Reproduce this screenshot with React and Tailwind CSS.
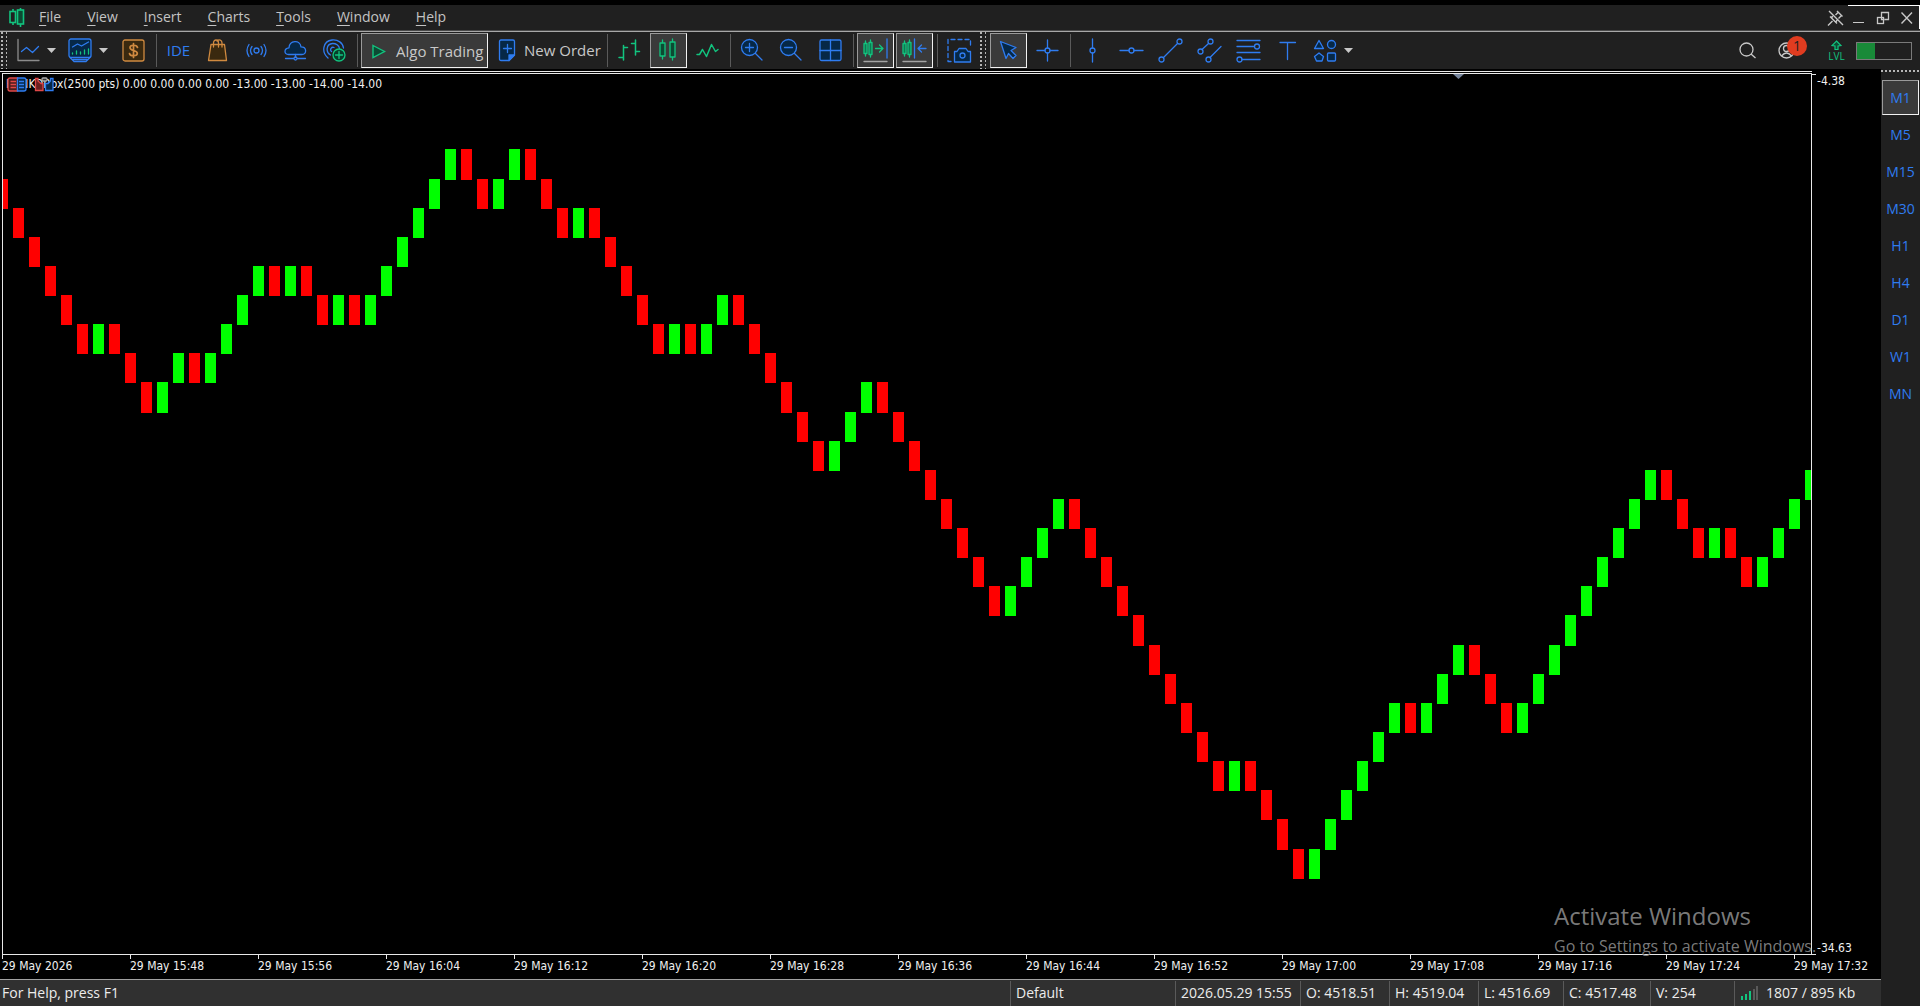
import clsx from "clsx"

const BLUE = "#2f7cf0"
const GREEN = "#12c47f"
const ORANGE = "#d08a40"
const GREY = "#c8c8c8"
const NAVY = "#062847"

const menus = ["File", "View", "Insert", "Charts", "Tools", "Window", "Help"]
const timeframes = ["M1", "M5", "M15", "M30", "H1", "H4", "D1", "W1", "MN"]
const times = ["29 May 2026", "29 May 15:48", "29 May 15:56", "29 May 16:04", "29 May 16:12", "29 May 16:20", "29 May 16:28", "29 May 16:36", "29 May 16:44", "29 May 16:52", "29 May 17:00", "29 May 17:08", "29 May 17:16", "29 May 17:24", "29 May 17:32"]

// renko runs: positive = up bricks, negative = down bricks
const runs = [-6, 1, -3, 2, -1, 4, -1, 1, -2, 1, -1, 6, -2, 2, -3, 1, -5, 1, -1, 2, -6, 3, -8, 4, -10, 1, -4, 6, -1, 3, -3, 9, -3, 1, -2, 4]

function getBricks() {
    const bricks = []
    let level = 0
    runs.forEach((run) => {
        const up = run > 0
        for (let n = 0; n < Math.abs(run); n++) {
            // the first brick after a reversal stays on the same level
            if (n > 0 || bricks.length === 0) level += up ? -1 : 1
            bricks.push({ up, level })
        }
    })
    return bricks
}

const levelY = (level) => Math.floor(75.88 + level * 29.13)

function Icon({ children, color = BLUE, fill = "none", w = 25 }) {
    return (
        <svg className="shrink-0" width={w} height="25" viewBox={`0 0 ${w} 25`} fill={fill} stroke={color} strokeWidth="1.3" strokeLinecap="round" strokeLinejoin="round" aria-hidden="true">
            {children}
        </svg>
    )
}

const Caret = () => (
    <svg className="shrink-0" width="9" height="5" viewBox="0 0 9 5" aria-hidden="true"><path d="M0 0H9L4.5 5Z" fill={GREY} /></svg>
)

function ToolButton({ label, active, children, className = "w-[39px] justify-center" }) {
    if (active) {
        return (
            <button aria-label={label} aria-pressed="true" className="mx-px flex h-[35px] w-[37px] shrink-0 items-center justify-center border border-t-[#9a9a9a] border-r-[#f2f2f2] border-b-[#f2f2f2] border-l-[#9a9a9a] bg-[#3a3a3a]">
                {children}
            </button>
        )
    }
    return <button aria-label={label} className={clsx("flex h-[37px] shrink-0 items-center", className)}>{children}</button>
}

const Separator = () => <div className="ml-[3px] mr-[2px] h-[33px] w-px shrink-0 bg-[#5a5a5a]" />

const Grip = ({ className }) => (
    <div className={clsx("flex h-[37px] shrink-0 gap-[3px]", className)}>
        <div className="w-[2px] bg-[repeating-linear-gradient(#b4b4b4_0_2px,transparent_2px_4px)]" />
        <div className="w-px bg-[repeating-linear-gradient(#b4b4b4_0_2px,transparent_2px_4px)]" />
    </div>
)

const candleShape = (
    <>
        <path d="M6.5 2V5M6.5 18V21M16.5 1V4M16.5 19V22" />
        <rect x="4" y="5" width="5" height="13" />
        <rect x="14" y="4" width="5" height="15" />
    </>
)

const smallCandles = (
    <g stroke={GREEN} fill="#0d7a50">
        <path d="M2.5 3V6M2.5 15V18M7.5 2V5M7.5 16V19" />
        <rect x="1" y="5.5" width="3" height="10" />
        <rect x="6" y="4.5" width="3" height="12" />
    </g>
)

function MenuBar() {
    return (
        <header className="flex h-[25px] shrink-0 items-center justify-between bg-[#202020]">
            <div className="flex items-center">
                <svg className="ml-[9px] mr-px" width="16" height="21" viewBox="0 0 16 21" fill="none" stroke={GREEN} strokeWidth="1.6" aria-hidden="true">
                    <path d="M4 2V5M4 15V18M11.5 1V3M11.5 17V20" />
                    <rect x="1" y="4.5" width="5.5" height="11" />
                    <rect x="8.5" y="3" width="6" height="14" fill="#0c4a33" />
                </svg>
                <nav className="flex">
                    {menus.map((menu) => (
                        <button key={menu} className="px-[13px] pb-px text-sm leading-[22px] text-[#c4c4c4]">
                            <span className="underline underline-offset-3">{menu[0]}</span>{menu.slice(1)}
                        </button>
                    ))}
                </nav>
            </div>
            <div className="flex h-full">
                <button aria-label="Unpin" className="flex w-[28px] items-center pl-[7px]">
                    <svg width="18" height="18" viewBox="0 0 18 18" fill="none" stroke={GREY} strokeWidth="1.4" aria-hidden="true">
                        <path d="M1 16.5L5.5 12M2 2L16 16M10 2L15.5 7.5M11 3.5L8.5 6M14 7L11.5 9.5M3 7.5L10 14.5M4 8.5L6 7.5M9 13L10 11" />
                    </svg>
                </button>
                <div className="flex h-[24px] items-center border-t border-r border-white">
                    <button aria-label="Minimize" className="w-[24px] px-[5px] pt-[9px]"><div className="h-px w-[11px] bg-[#c8c8c8]" /></button>
                    <button aria-label="Restore" className="w-[24px] px-[4px]">
                        <svg width="14" height="14" viewBox="0 0 14 14" fill="none" stroke={GREY} strokeWidth="1.3" aria-hidden="true">
                            <path d="M5.5 4V1.5H12.5V8.5H8.5" /><rect x="1.5" y="6.5" width="6" height="6" /><path d="M5.5 4V8.5H8.5" />
                        </svg>
                    </button>
                    <button aria-label="Close" className="w-[23px] px-[4px]">
                        <svg width="14" height="14" viewBox="0 0 14 14" stroke={GREY} strokeWidth="1.4" aria-hidden="true"><path d="M1.5 1.5L12 12.5M12 1.5L1.5 12.5" /></svg>
                    </button>
                </div>
            </div>
        </header>
    )
}

function Toolbar() {
    return (
        <div className="flex h-[37px] shrink-0 items-center overflow-hidden bg-[#202020]">
            <Grip className="w-[9px] shrink-0 pl-px" />
            <ToolButton label="Chart type" className="w-[52px] gap-[6px] pl-[7px]">
                <Icon><path d="M2 1.5V22.5H23" stroke="#8c8c8c" /><path d="M5.5 13.5L10.5 9.5L16.5 14.5L22.5 8.5" /></Icon>
                <Caret />
            </ToolButton>
            <ToolButton label="Indicators" className="w-[52px] gap-[6px] pl-[7px]">
                <Icon>
                    <rect x="1" y="1" width="22" height="18.5" rx="2" fill={NAVY} />
                    <path d="M2 19.5L6 23.5H18L22 19.5M5 21.5H19" />
                    <path d="M4.5 9L9.5 6L13.5 8L20.5 4" />
                    <path d="M4.5 15V16M8.5 13V16M12.5 14V16M16.5 12V16M20.5 11V16" stroke={GREEN} />
                </Icon>
                <Caret />
            </ToolButton>
            <ToolButton label="Symbols" className="w-[40px] justify-center">
                <Icon color={ORANGE}>
                    <rect x="2" y="2" width="21" height="21" rx="2" fill="#3a290f" />
                    <path d="M12.5 5.5V19.5M16.5 9.5C16 6.5 9 6.5 9 9.7C9 13 16.3 12 16.3 15.3C16.3 18.5 9 18.5 8.5 15.5" strokeWidth="1.7" />
                </Icon>
            </ToolButton>
            <Separator />
            <button className="flex h-[37px] w-[39px] shrink-0 items-center justify-center text-[15px] text-[#2f7cf0]">IDE</button>
            <ToolButton label="Market">
                <Icon color={ORANGE}>
                    <path d="M6 6.5H19.5L21.5 22.5H3.5Z" fill="#3a290f" />
                    <path d="M8.5 9V5C8.5 1 13.5 1 13.5 5V9M12 3C14 1 17 2 17 5V9" />
                </Icon>
            </ToolButton>
            <ToolButton label="Signals">
                <Icon>
                    <circle cx="12.5" cy="12.5" r="2.5" />
                    <path d="M8 8.5Q5 12.5 8 16.5M17 8.5Q20 12.5 17 16.5M5 6.5Q1 12.5 5 18.5M20 6.5Q24 12.5 20 18.5" />
                </Icon>
            </ToolButton>
            <ToolButton label="Virtual hosting">
                <Icon>
                    <path d="M5.5 16.5C1 16.5 0.5 10.5 6 9.8C6.5 2 17 1.5 18 8.8C24 8.8 24 16.5 19 16.5Z" fill={NAVY} />
                    <path d="M12.5 16.5V19.5M2.5 20.5H10.5M14.5 20.5H22.5" /><circle cx="12.5" cy="20.5" r="1.5" />
                </Icon>
            </ToolButton>
            <ToolButton label="Add account">
                <Icon>
                    <path d="M6 20C-1 14 1 3 10 2C16 1.3 21 5 21.5 10M8.5 17C3.5 14 4 6 10.5 5.5C14 5.3 17 7.5 17.5 10.5M9.5 13.5C7.5 11.5 9.5 8.5 12 9.5" />
                    <circle cx="17" cy="17" r="6" fill="#073d2b" stroke={GREEN} /><path d="M17 13.5V20.5M13.5 17H20.5" stroke={GREEN} />
                </Icon>
            </ToolButton>
            <Separator />
            <button aria-pressed="true" className="ml-px flex h-[35px] w-[127px] shrink-0 items-center gap-[10px] border border-t-[#9a9a9a] border-r-[#f2f2f2] border-b-[#f2f2f2] border-l-[#9a9a9a] bg-[#3a3a3a] pt-px pl-[10px] text-[15px] whitespace-nowrap text-[#c8c8c8]">
                <svg className="shrink-0" width="14" height="15" viewBox="0 0 14 15" aria-hidden="true"><path d="M1 1.5L12.5 7.5L1 13.5Z" fill="#0c4a33" stroke={GREEN} strokeWidth="1.4" /></svg>
                Algo Trading
            </button>
            <button className="flex h-[37px] w-[116px] shrink-0 items-center gap-[4px] pl-[7px] text-[15px] whitespace-nowrap text-[#c8c8c8]">
                <Icon>
                    <path d="M6 2H18Q19.5 2 19.5 3.5V17L14 22.5H6Q4.5 22.5 4.5 21V3.5Q4.5 2 6 2Z" fill={NAVY} />
                    <path d="M19.5 17L14 22.5V17Z" fill={BLUE} /><path d="M12.5 6.5V14.5M8.5 10.5H16.5" />
                </Icon>
                New Order
            </button>
            <Separator />
            <ToolButton label="Bar chart">
                <Icon color={GREEN}><path d="M6.5 7.5V22M2 19.5H6.5M6.5 9.5H10.5M18.5 2V17M14.5 5.5H18.5M18.5 13.5H22.5" strokeWidth="1.5" /></Icon>
            </ToolButton>
            <ToolButton label="Candlesticks" active><Icon color={GREEN} fill="#0c4a33">{candleShape}</Icon></ToolButton>
            <ToolButton label="Line chart"><Icon color={GREEN}><path d="M2 16.5H4.5L7.5 11.5L11.5 18.5L16.5 6.5L20.5 13.5L23 11.5" strokeWidth="1.5" /></Icon></ToolButton>
            <Separator />
            <ToolButton label="Zoom in"><Icon><circle cx="9.5" cy="9.5" r="8" fill={NAVY} /><path d="M15.5 15.5L22 22M5.5 9.5H13.5M9.5 5.5V13.5" /></Icon></ToolButton>
            <ToolButton label="Zoom out"><Icon><circle cx="9.5" cy="9.5" r="8" fill={NAVY} /><path d="M15.5 15.5L22 22M5.5 9.5H13.5" /></Icon></ToolButton>
            <ToolButton label="Tile windows"><Icon><rect x="2" y="2" width="21" height="20.5" rx="1.5" fill={NAVY} /><path d="M12.5 2V22.5M2 12.5H23" /></Icon></ToolButton>
            <Separator />
            <ToolButton label="Auto scroll" active>
                <Icon>{smallCandles}<path d="M12.5 10.5H20M16.5 7L20 10.5L16.5 14" stroke={GREEN} /><path d="M24 1V20" /><path d="M1 23.5H24" stroke="#a4a4a4" /></Icon>
            </ToolButton>
            <ToolButton label="Chart shift" active>
                <Icon>{smallCandles}<path d="M12.5 1V20M16 10.5H24M19.5 7L16 10.5L19.5 14" /><path d="M1 23.5H24" stroke="#a4a4a4" /></Icon>
            </ToolButton>
            <Separator />
            <ToolButton label="Screenshot">
                <Icon>
                    <path d="M4 23.5H1V1.5H23.5V8" strokeDasharray="4 3" />
                    <path d="M7.5 13.5H10L12 10.5H19L21 13.5H23.5V24H7.5Z" fill={NAVY} /><circle cx="15.5" cy="17.5" r="2.5" />
                </Icon>
            </ToolButton>
            <Grip className="w-[10px] pl-px" />
            <ToolButton label="Cursor" active>
                <Icon><path d="M4.500 3.500L20 9.500L15 12.500L20 17.500L17 20.500L12.500 15.500L10 20.500Z" fill={NAVY} /></Icon>
            </ToolButton>
            <ToolButton label="Crosshair"><Icon><path d="M12.5 2V10M12.5 15V23M2 12.5H10M15 12.5H23" /><circle cx="12.5" cy="12.5" r="2.5" /></Icon></ToolButton>
            <Separator />
            <ToolButton label="Vertical line"><Icon><path d="M12.5 1V10M12.5 15V24" /><circle cx="12.5" cy="12.5" r="2.5" /></Icon></ToolButton>
            <ToolButton label="Horizontal line"><Icon><path d="M1 12.5H10M15 12.5H24" /><circle cx="12.5" cy="12.5" r="2.5" /></Icon></ToolButton>
            <ToolButton label="Trendline"><Icon><path d="M5.5 19.5L19.5 5.5" /><circle cx="3.5" cy="21.5" r="2.5" /><circle cx="21.5" cy="3.5" r="2.5" /></Icon></ToolButton>
            <ToolButton label="Channel"><Icon><path d="M5 11.5L11.5 5.5M13 19.5L24 8.5" /><circle cx="3.5" cy="13.5" r="2.5" /><circle cx="13.5" cy="3.5" r="2.5" /><circle cx="11.5" cy="21.5" r="2.5" /></Icon></ToolButton>
            <ToolButton label="Fibonacci"><Icon><path d="M1 2.5H24M1 8.5H18M1 14.5H24M6 21.5H24" /><circle cx="21" cy="8.5" r="2.5" /><circle cx="3.5" cy="21.5" r="2.5" /></Icon></ToolButton>
            <ToolButton label="Text"><Icon><path d="M5 4.5H20.5M12.5 4.5V21.5" /></Icon></ToolButton>
            <ToolButton label="Shapes" className="w-[52px] gap-[6px] pl-[6px]">
                <Icon fill={NAVY}>
                    <path d="M6 2.5L10.5 10.5H1.5Z" /><circle cx="18.5" cy="6.5" r="4" />
                    <path d="M6 15L10.5 18.5L9 23H3.5L1.5 18.5Z" /><rect x="14.5" y="15" width="8" height="8" rx="1" />
                </Icon>
                <Caret />
            </ToolButton>
            <div className="ml-auto flex items-center pr-[8px]">
                <ToolButton label="Search">
                    <svg width="17" height="17" viewBox="0 0 17 17" fill="none" stroke={GREY} strokeWidth="1.3" aria-hidden="true"><circle cx="7.5" cy="7.5" r="6.5" /><path d="M12 12L16.5 16" /></svg>
                </ToolButton>
                <button aria-label="Account, 1 notification" className="relative flex h-[37px] w-[61px] items-center pl-[11px]">
                    <svg width="17" height="17" viewBox="0 0 17 17" fill="none" stroke={GREY} strokeWidth="1.3" aria-hidden="true">
                        <circle cx="8.5" cy="8.5" r="7.5" /><circle cx="8.5" cy="6.5" r="3" /><path d="M3.5 14Q8.5 8 13.5 14" />
                    </svg>
                    <span className="absolute top-[4px] left-[20px] flex size-[20px] items-center justify-center rounded-full bg-[#e03c20] text-sm text-[#202020]">1</span>
                </button>
                <button aria-label="Level" className="mr-[11px] flex w-[17px] flex-col items-center text-[#12c47f]">
                    <svg width="11" height="11" viewBox="0 0 11 11" fill="#0c4a33" stroke={GREEN} strokeWidth="1.2" aria-hidden="true"><path d="M5.5 1L10 5.5L7 6V9.5H4V6L1 5.5Z" /></svg>
                    <span className="text-[10px] leading-[11px] font-medium">LVL</span>
                </button>
                <div className="h-[18px] w-[56px] border border-[#7a7a7a]"><div className="h-full w-[18px] bg-[#188a38]" /></div>
            </div>
        </div>
    )
}

function Chart() {
    return (
        <section className="flex min-h-0 flex-1 flex-col bg-black pt-[2px] font-['DejaVu_Sans_Condensed','DejaVu_Sans',sans-serif] text-xs leading-[16px] text-[#f0f0f0]">
            <div className="flex min-h-0 flex-1">
                <div className="flex min-w-0 flex-1 flex-col border-t border-[#e8e8e8] pt-px">
                    <div className="relative ml-[2px] min-h-0 flex-1 overflow-hidden border border-[#e8e8e8]">
                        <svg className="block size-full" shapeRendering="crispEdges" role="img" aria-label="Renko chart">
                            {getBricks().map((brick, i) => {
                                const y = levelY(brick.level)
                                return <rect key={i} x={i * 16 - 6} y={y} width="11" height={levelY(brick.level + 1) - y + 1} fill={brick.up ? "#00ff00" : "#ff0000"} />
                            })}
                        </svg>
                        <div className="absolute top-[2px] left-[3px] whitespace-nowrap">RENKOBox(2500 pts) 0.00 0.00 0.00 0.00 -13.00 -13.00 -14.00 -14.00</div>
                        <svg className="absolute top-[3px] left-[4px]" width="48" height="15" viewBox="0 0 48 15" strokeWidth="1.3" aria-hidden="true">
                            <path d="M10.5 1H3Q1 1 1 3V12Q1 14 3 14H10.5Z" fill="#4d1b1b" stroke="#e04848" />
                            <path d="M10.5 1H17Q19 1 19 3V12Q19 14 17 14H10.5Z" fill={NAVY} stroke={BLUE} />
                            <path d="M3.5 4.5H9M3.5 7.5H9M3.5 10.5H9" stroke="#e04848" /><path d="M12 4.5H17M12 7.5H17M12 10.5H17" stroke={BLUE} />
                            <path d="M28.5 1.5H31V4L34 6.5H36V13.5H28.5Z" fill="#6a2020" stroke="#e04848" />
                            <path d="M46 1.5H43.5V4L41 6.5H38.5V13.5H46Z" fill={NAVY} stroke={BLUE} />
                            <rect x="35" y="1" width="5" height="3" rx="1" fill="#333" stroke="#aaa" />
                        </svg>
                        <svg className="absolute top-0 right-[347px]" width="11" height="5" viewBox="0 0 11 5" aria-hidden="true"><path d="M0 0H11L5.5 5Z" fill="#76859c" /></svg>
                    </div>
                </div>
                <div className="flex w-[69px] shrink-0 flex-col justify-between pt-[3px] leading-[12px]">
                    <div><div className="h-px w-[4px] bg-[#e8e8e8]" /><div className="pl-[5px]">-4.38</div></div>
                    <div><div className="pl-[5px]">-34.63</div><div className="h-px w-[4px] bg-[#e8e8e8]" /></div>
                </div>
            </div>
            <div className="ml-[2px] flex h-[24px] shrink-0 overflow-hidden">
                {times.map((time) => (
                    <div key={time} className="w-[128px] shrink-0 leading-[14px] whitespace-nowrap">
                        <div className="h-[4px] w-px bg-[#e8e8e8]" />
                        <div>{time}</div>
                    </div>
                ))}
            </div>
        </section>
    )
}

function StatusCell({ children, className }) {
    return <div className={clsx("flex h-[25px] shrink-0 items-center border-l border-[#5a5a5a] pl-[5px]", className)}>{children}</div>
}

function StatusBar() {
    return (
        <footer className="flex h-[27px] shrink-0 items-center border-t border-[#a0a0a0] bg-[#303030] text-sm whitespace-nowrap text-[#ececec]">
            <div className="min-w-0 flex-1 pl-[2px]">For Help, press F1</div>
            <StatusCell className="w-[165px]">Default</StatusCell>
            <StatusCell className="w-[125px]">2026.05.29 15:55</StatusCell>
            <StatusCell className="w-[89px]">O: 4518.51</StatusCell>
            <StatusCell className="w-[89px]">H: 4519.04</StatusCell>
            <StatusCell className="w-[85px]">L: 4516.69</StatusCell>
            <StatusCell className="w-[87px]">C: 4517.48</StatusCell>
            <StatusCell className="w-[84px]">V: 254</StatusCell>
            <StatusCell className="w-[147px] gap-[8px]">
                <svg width="18" height="14" viewBox="0 0 18 14" aria-hidden="true">
                    <path d="M1 10H3V14H1ZM5 8H7V14H5ZM9 5H11V14H9Z" fill={GREEN} /><path d="M13 3H15V14H13ZM16 0H18V14H16Z" fill="#5a5a5a" />
                </svg>
                1807 / 895 Kb
            </StatusCell>
        </footer>
    )
}

function Timeframes() {
    return (
        <aside className="flex w-[39px] shrink-0 flex-col bg-[#202020] pt-px">
            <div className="h-[2px] bg-[repeating-linear-gradient(90deg,#b4b4b4_0_2px,transparent_2px_4px)]" />
            <div className="flex flex-col pt-[7px]">
                {timeframes.map((tf, i) => (
                    <button key={tf} aria-pressed={i === 0} className={clsx("mx-px my-px flex h-[35px] items-center justify-center border pt-px text-sm text-[#2f7cf0]", i === 0 ? "border-t-[#9a9a9a] border-r-[#f2f2f2] border-b-[#f2f2f2] border-l-[#9a9a9a] bg-[#3a3a3a]" : "border-transparent")}>
                        {tf}
                    </button>
                ))}
            </div>
        </aside>
    )
}

export default function App() {
    return (
        <div className="relative flex h-screen flex-col overflow-hidden bg-black pt-[5px] font-['Open_Sans','Noto_Sans',sans-serif]">
            <MenuBar />
            <div className="h-[2px] shrink-0 border-t border-[#4a4a4a] bg-[#a8a8a8]" />
            <Toolbar />
            <div className="flex min-h-0 flex-1">
                <main className="flex min-w-0 flex-1 flex-col">
                    <Chart />
                    <StatusBar />
                </main>
                <Timeframes />
            </div>
            <div className="pointer-events-none absolute right-[85px] bottom-[48px] w-[281px] whitespace-nowrap text-[#8a8a8a]/90">
                <div className="text-2xl leading-[36px]">Activate Windows</div>
                <div className="text-base leading-[24px]">Go to Settings to activate Windows.</div>
            </div>
        </div>
    )
}
